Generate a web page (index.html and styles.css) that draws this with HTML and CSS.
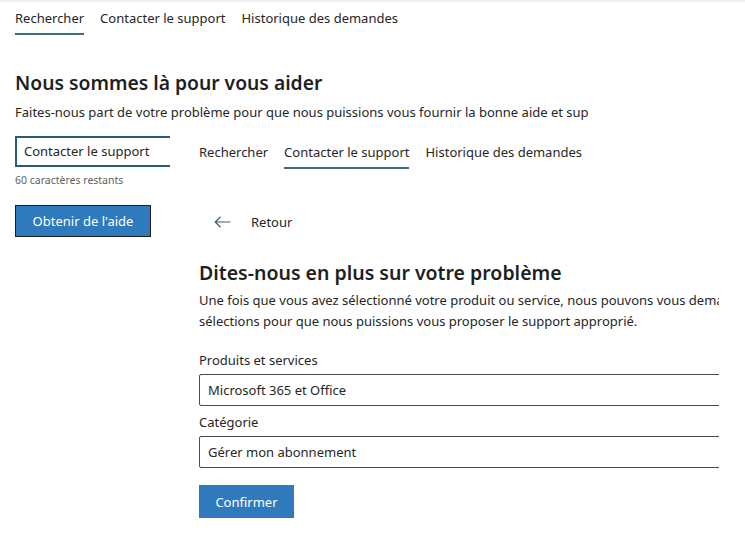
FILE: index.html
```html
<!DOCTYPE html>
<html lang="fr">
<head>
<meta charset="utf-8">
<title>Support</title>
<link rel="stylesheet" href="styles.css">
</head>
<body>
<div class="topline"></div>
<div class="page">
  <nav class="tabs">
    <span class="tab active">Rechercher</span>
    <span class="tab">Contacter le support</span>
    <span class="tab">Historique des demandes</span>
  </nav>
  <h1 class="title">Nous sommes là pour vous aider</h1>
  <div class="intro-clip"><p class="intro">Faites-nous part de votre problème pour que nous puissions vous fournir la bonne aide et support.</p></div>
  <div class="main">
    <aside class="left">
      <div class="query">Contacter le support</div>
      <div class="count">60 caractères restants</div>
      <button class="btn btn-bordered">Obtenir de l'aide</button>
    </aside>
    <section class="right">
      <nav class="tabs">
        <span class="tab">Rechercher</span>
        <span class="tab active">Contacter le support</span>
        <span class="tab">Historique des demandes</span>
      </nav>
      <div class="back">
        <svg class="arrow" width="17" height="12" viewBox="0 0 17 12"><path d="M16.5 6H1.2M6.5 0.8L1.2 6l5.3 5.2" fill="none" stroke="#3d5f78" stroke-width="1.2"/></svg>
        <span>Retour</span>
      </div>
      <h2 class="subtitle">Dites-nous en plus sur votre problème</h2>
      <p class="desc">Une fois que vous avez sélectionné votre produit ou service, nous pouvons vous demander d'affiner vos<br>sélections pour que nous puissions vous proposer le support approprié.</p>
      <div class="label first">Produits et services</div>
      <div class="select">Microsoft 365 et Office</div>
      <div class="label">Catégorie</div>
      <div class="select">Gérer mon abonnement</div>
      <button class="btn btn-confirm">Confirmer</button>
    </section>
  </div>
</div>
</body>
</html>
```

FILE: styles.css
```css
* { box-sizing: border-box; }
html, body { margin: 0; padding: 0; background: #fff; }
body {
  font-family: "Noto Sans", "Open Sans", sans-serif;
  font-size: 13px;
  color: #262626;
  width: 745px;
  height: 534px;
  overflow: hidden;
}
.topline { height: 2px; background: #efefef; }
.page { padding-left: 15px; }
.tabs { display: flex; gap: 16px; }
.tab {
  line-height: 18px;
  padding: 7px 0 6px;
  border-bottom: 2px solid transparent;
  white-space: nowrap;
}
.tab.active { border-bottom-color: #3f6a86; }
.title {
  margin: 34px 0 0;
  font-size: 19.3px;
  line-height: 28px;
  font-weight: 600;
  color: #1f1f1f;
}
.intro-clip { width: 573px; overflow: hidden; margin-top: 5px; }
.intro { margin: 0; line-height: 20px; white-space: nowrap; }
.main { display: flex; gap: 29px; margin-top: 14px; }
.left { width: 155px; flex: none; overflow: hidden; }
.query {
  width: 170px;
  height: 31px;
  border: 2px solid #2c5a79;
  border-right: none;
  padding-left: 7px;
  line-height: 27px;
  white-space: nowrap;
}
.count { margin-top: 6px; font-size: 10.5px; line-height: 14px; color: #616161; }
.btn {
  display: block;
  font-family: inherit;
  font-size: 13px;
  color: #fff;
  background: #2f7abd;
  cursor: pointer;
  padding: 0;
}
.btn-bordered {
  margin-top: 18px;
  width: 136px;
  height: 32px;
  border: 1px solid #1e1e1e;
}
.right { width: 520px; flex: none; overflow: hidden; }
.back {
  display: flex;
  align-items: center;
  gap: 20px;
  height: 24px;
  margin-top: 41px;
  padding-left: 15px;
}
.arrow { display: block; }
.subtitle {
  margin: 25px 0 0;
  font-size: 19.5px;
  line-height: 28px;
  font-weight: 600;
  color: #1f1f1f;
  white-space: nowrap;
}
.desc { margin: 3px 0 0; line-height: 21px; white-space: nowrap; }
.label { margin-top: 6px; line-height: 20px; }
.label.first { margin-top: 18px; }
.select {
  margin-top: 4px;
  width: 560px;
  height: 32px;
  border: 1px solid #4a4a4a;
  border-radius: 2px;
  padding-left: 8px;
  line-height: 30px;
}
.btn-confirm {
  margin-top: 17px;
  width: 95px;
  height: 33px;
  border: none;
}
```
